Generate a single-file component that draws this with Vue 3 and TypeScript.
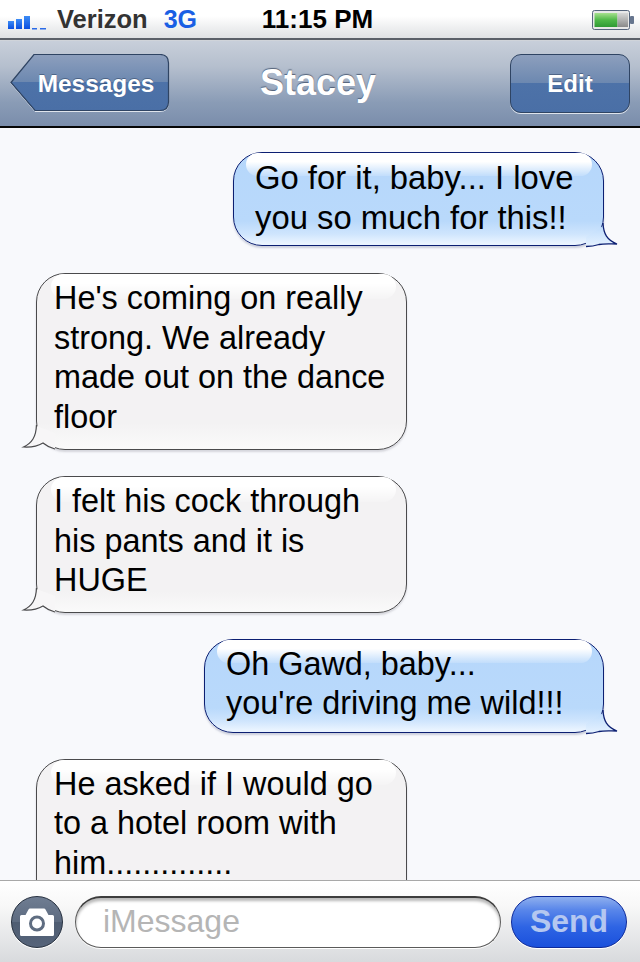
<script setup lang="ts">
interface Msg { id: number; me: boolean; lines: string[]; width: number; tight?: boolean; big?: boolean }
const messages: Msg[] = [
  { id: 1, me: true, big: true, width: 371, lines: ['Go for it, baby... I love', 'you so much for this!!'] },
  { id: 2, me: false, width: 371, lines: ["He's coming on really", 'strong. We already', 'made out on the dance', 'floor'] },
  { id: 3, me: false, width: 371, tight: true, lines: ['I felt his cock through', 'his pants and it is', 'HUGE'] },
  { id: 4, me: true, width: 400, lines: ['Oh Gawd, baby...', "you're driving me wild!!!"] },
  { id: 5, me: false, width: 371, lines: ['He asked if I would go', 'to a hotel room with', 'him..............', ''] }
]
</script>

<template>
  <div class="phone">
    <header class="status">
      <div class="status-left">
        <svg class="signal" width="38" height="14" viewBox="0 0 38 14">
          <defs>
            <linearGradient id="sig" x1="0" y1="0" x2="0" y2="1">
              <stop offset="0" stop-color="#3d8cf5" />
              <stop offset="1" stop-color="#0a4fe0" />
            </linearGradient>
          </defs>
          <rect x="0" y="5" width="6" height="8" fill="url(#sig)" />
          <rect x="8" y="3" width="6" height="10" fill="url(#sig)" />
          <rect x="16" y="0" width="6" height="13" fill="url(#sig)" />
          <rect x="24" y="12" width="5" height="1.500" fill="#2a6be8" />
          <rect x="32" y="12" width="6" height="1.500" fill="#2a6be8" />
        </svg>
        <span class="carrier">Verizon</span>
        <span class="net">3G</span>
      </div>
      <span class="time">11:15 PM</span>
      <svg class="battery" width="42" height="21" viewBox="0 0 42 21">
        <defs>
          <linearGradient id="bat" x1="0" y1="0" x2="0" y2="1">
            <stop offset="0" stop-color="#a6e08e" />
            <stop offset="0.5" stop-color="#4fb848" />
            <stop offset="1" stop-color="#2f9a35" />
          </linearGradient>
          <linearGradient id="batEmpty" x1="0" y1="0" x2="0" y2="1">
            <stop offset="0" stop-color="#d8d8d8" />
            <stop offset="1" stop-color="#8a8a8a" />
          </linearGradient>
        </defs>
        <rect x="0.500" y="0.500" width="37" height="19" rx="2" fill="#e8e8e8" stroke="#56657c" />
        <rect x="2.500" y="3" width="23" height="14" fill="url(#bat)" />
        <rect x="25.500" y="3" width="10.500" height="14" fill="url(#batEmpty)" />
        <rect x="38" y="6" width="4" height="8" rx="1" fill="#66758e" />
      </svg>
    </header>

    <nav class="nav">
      <button class="btn back">
        <svg class="back-shape" width="160" height="60" viewBox="0 0 160 60">
          <defs>
            <linearGradient id="backFill" x1="0" y1="0" x2="0" y2="1">
              <stop offset="0" stop-color="#8d9fbd" />
              <stop offset="0.49" stop-color="#6c88b0" />
              <stop offset="0.5" stop-color="#4d72a8" />
              <stop offset="1" stop-color="#4a6fa6" />
            </linearGradient>
          </defs>
          <path d="M1 28.500 L24 0.500 H150 Q158.500 0.500 158.500 9 V48 Q158.500 56.500 150 56.500 H25 Z" fill="url(#backFill)" stroke="#dfe4ec" stroke-width="1" transform="translate(0 1)" />
          <path d="M1 28.500 L24 0.500 H150 Q158.500 0.500 158.500 9 V48 Q158.500 56.500 150 56.500 H25 Z" fill="url(#backFill)" stroke="#2f4463" stroke-width="1.200" />
        </svg>
        <span class="btn-label back-label">Messages</span>
      </button>
      <h1 class="title">Stacey</h1>
      <button class="btn edit"><span class="btn-label">Edit</span></button>
    </nav>

    <main class="thread">
      <div v-for="m in messages" :key="m.id" class="row" :class="m.me ? 'row-me' : 'row-them'">
        <div class="bubble" :class="[m.me ? 'me' : 'them', { tight: m.tight, big: m.big }]" :style="{ width: m.width + 'px' }">
          <svg v-if="m.me" class="tail tail-me" width="34" height="24" viewBox="0 0 34 24">
            <defs>
              <linearGradient :id="'tm' + m.id" x1="0" y1="0" x2="0" y2="1">
                <stop offset="0" stop-color="#bedcfc" />
                <stop offset="1" stop-color="#e6f2ff" />
              </linearGradient>
            </defs>
            <path d="M20 3 C20.500 11 24 17 34 21 C27 21 21 20.500 16 21.500 Q10 23.500 3 23.500 L3 14 Z" :fill="'url(#tm' + m.id + ')'" />
            <path d="M20 0 C20.500 11 24 17 34 21 C27 21 21 20.500 16 21.500 Q10 23.500 3 23.500" fill="none" stroke="#0c1f72" stroke-width="1.300" />
          </svg>
          <svg v-else class="tail tail-them" width="34" height="26" viewBox="0 0 34 26">
            <path d="M13.500 1 C13 12 9 18 0.500 22 C8 22.500 15 21 20 18 C23 20.500 26 22.500 32 24 L32 8 Z" fill="#f7f6f7" />
            <path d="M13.500 0 C13 12 9 18 0.500 22 C8 22.500 15 21 20 18 C23 20.500 26 22.500 32 24" fill="none" stroke="#4a4a4c" stroke-width="1.200" />
          </svg>
          <div class="gloss"></div>
          <div class="text">
            <div v-for="(l, i) in m.lines" :key="i" class="line">{{ l }}</div>
          </div>
        </div>
      </div>
    </main>

    <footer class="composer">
      <div class="camera">
        <svg width="36" height="30" viewBox="0 0 36 30">
          <path d="M2.500 8 H6.500 L9.500 2.500 Q10 1.500 11 1.500 H25 Q26 1.500 26.500 2.500 L29.500 8 H33.500 Q35 8 35 9.500 V27.500 Q35 29 33.500 29 H2.500 Q1 29 1 27.500 V9.500 Q1 8 2.500 8 Z" fill="#fff" />
          <circle cx="18" cy="16.500" r="6.500" fill="none" stroke="#5f6d81" stroke-width="3" />
        </svg>
      </div>
      <div class="field">iMessage</div>
      <button class="send">Send</button>
    </footer>
  </div>
</template>

<style>
html, body { margin: 0; padding: 0; background: #f8f9fc; }
</style>

<style scoped>
.phone {
  width: 640px;
  height: 962px;
  display: flex;
  flex-direction: column;
  overflow: hidden;
  background: #f8f9fc;
  font-family: "Liberation Sans", Arial, sans-serif;
}
.status {
  height: 38px;
  flex: none;
  display: grid;
  grid-template-columns: 1fr auto 1fr;
  align-items: center;
  padding: 0 6px 0 8px;
  background: linear-gradient(#ffffff 0, #ffffff 42%, #dfe1e3 100%);
  border-bottom: 2px solid #5b6068;
}
.status-left { display: flex; align-items: center; }
.signal { margin-top: 8px; flex: none; }
.carrier { margin-left: 11px; font-size: 25.500px; font-weight: 700; color: #333; }
.net { margin-left: 16px; font-size: 25px; font-weight: 700; color: #1a5fe4; }
.time { font-size: 26px; font-weight: 700; color: #000; margin-left: -7px; }
.battery { justify-self: end; margin-top: 2px; }

.nav {
  height: 88px;
  flex: none;
  box-sizing: border-box;
  display: flex;
  align-items: center;
  justify-content: space-between;
  padding: 0 10px;
  position: relative;
  background: linear-gradient(#c8cfda 0, #b5bfce 30%, #8a9cb6 72%, #7a8dab 100%);
  border-top: 1px solid #d0d4da;
  border-bottom: 2px solid #050505;
}
.btn {
  border: 0;
  padding: 0;
  background: none;
  height: 60px;
  display: flex;
  align-items: center;
  justify-content: center;
  position: relative;
  font-family: inherit;
}
.back { width: 160px; }
.back-shape { position: absolute; left: 0; top: 0; }
.edit {
  width: 120px;
  height: 59px;
  box-sizing: border-box;
  border-radius: 11px;
  border: 1px solid #2f4463;
  box-shadow: 0 1px 0 #dfe4ec;
  background: linear-gradient(#8d9fbd 0, #6c88b0 49%, #4d72a8 50%, #4a6fa6 100%);
}
.btn-label {
  position: relative;
  font-size: 24px;
  font-weight: 700;
  color: #fff;
  text-shadow: 0 -1px 0 rgba(40, 60, 90, 0.5);
}
.back-label { margin-left: 12px; font-size: 24.400px; }
.title {
  position: absolute;
  left: 0;
  right: 4px;
  top: 20px;
  margin: 0;
  text-align: center;
  font-size: 36px;
  line-height: 44px;
  font-weight: 700;
  color: #fff;
  text-shadow: 0 -1px 1px rgba(60, 75, 100, 0.8);
  pointer-events: none;
}

.thread {
  flex: 1;
  min-height: 0;
  overflow: hidden;
  display: flex;
  flex-direction: column;
  gap: 26px;
  padding-top: 24px;
  background: #f8f9fc;
}
.row { display: flex; flex: none; }
.row:first-child { margin-bottom: 1px; }
.row-me { justify-content: flex-end; padding-right: 36px; }
.row-them { justify-content: flex-start; padding-left: 36px; }
.bubble {
  position: relative;
  box-sizing: border-box;
  border-radius: 29px;
  font-size: 32.400px;
  line-height: 39.500px;
  color: #000;
}
.bubble.big { font-size: 32.800px; }
.me {
  padding: 5px 6px 8px 21px;
  border: 1px solid #0c1f72;
  background: linear-gradient(#b6d7fb 0, #b9d9fb 74%, #cfe5fd 88%, #eaf4ff 98%);
  box-shadow: 0 2px 2px rgba(120, 130, 160, 0.35);
}
.them {
  padding: 5px 6px 12px 17px;
  border: 1px solid #4a4a4c;
  background: linear-gradient(#f3f2f3 0, #f3f2f3 85%, #fafafa 100%);
  box-shadow: 0 2px 2px rgba(150, 150, 160, 0.35);
}
.them.tight { padding-bottom: 11px; }
.gloss {
  position: absolute;
  left: 12px;
  right: 11px;
  top: 0;
  height: 23px;
  border-radius: 16px;
  background: linear-gradient(#ffffff 0, #ffffff 38%, rgba(255, 255, 255, 0.15) 100%);
}
.them .gloss { left: 14px; right: 10px; height: 25px; }
.text { position: relative; }
.line { height: 39.500px; white-space: pre; }
.tail { position: absolute; overflow: visible; }
.tail-me { right: -14px; bottom: -2px; }
.tail-them { left: -14px; bottom: -2px; }

.composer {
  height: 82px;
  flex: none;
  box-sizing: border-box;
  display: flex;
  align-items: flex-start;
  padding: 15px 13px 0 11px;
  border-top: 1px solid #a8a8a8;
  background: linear-gradient(#ffffff 0, #f8f8f8 30%, #d8dadd 100%);
}
.camera {
  width: 52px;
  height: 52px;
  flex: none;
  box-sizing: border-box;
  border-radius: 50%;
  border: 1px solid #26303f;
  box-shadow: 0 1px 0 #fff;
  display: flex;
  align-items: center;
  justify-content: center;
  background: linear-gradient(#6f7d92 0, #5d6b80 50%, #4f5d72 51%, #56647a 100%);
}
.camera svg { margin-top: -1px; }
.field {
  width: 426px;
  height: 52px;
  flex: none;
  margin-left: 12px;
  box-sizing: border-box;
  border-radius: 26px;
  border: 1px solid #5a5a5a;
  border-top: 2px solid #3c3c3c;
  box-shadow: inset 0 3px 3px rgba(0, 0, 0, 0.28), 0 1px 0 #fff;
  background: #fff;
  padding-left: 27px;
  font-size: 32px;
  line-height: 47px;
  color: #b5b5b5;
}
.send {
  width: 116px;
  height: 52px;
  flex: none;
  margin-left: 10px;
  padding: 0 0 2px;
  box-sizing: border-box;
  border-radius: 26px;
  border: 1px solid #0d2a9a;
  background: linear-gradient(#8fb0ee 0, #5a87ea 25%, #2e64e4 60%, #1a50dc 100%);
  box-shadow: 0 1px 0 #fff;
  font-family: inherit;
  font-size: 32px;
  font-weight: 700;
  color: #b4c7f0;
}
</style>
